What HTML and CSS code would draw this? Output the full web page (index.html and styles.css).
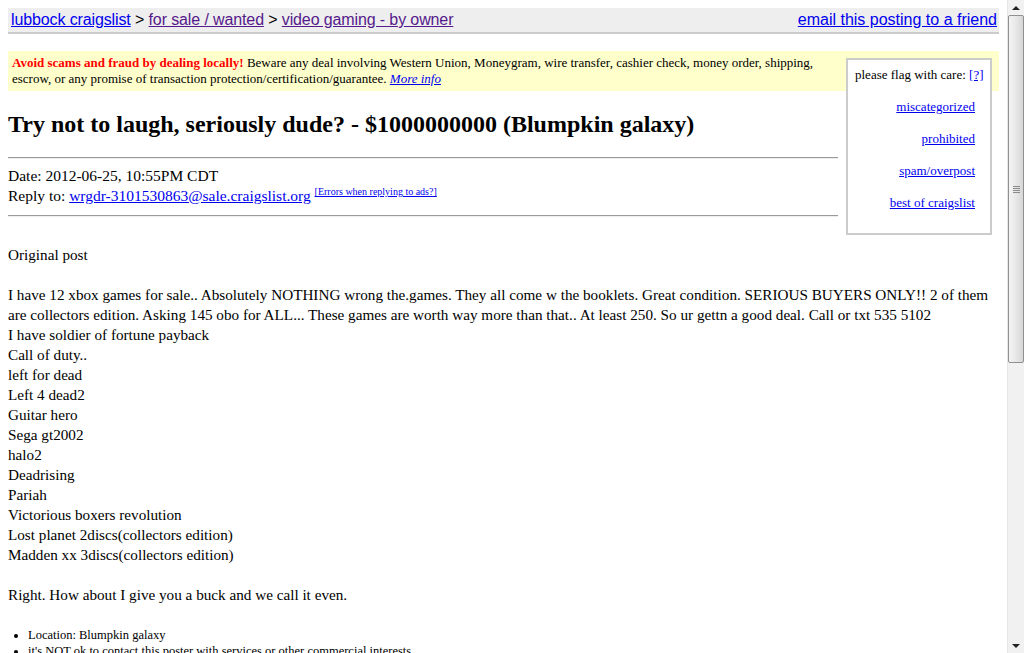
FILE: index.html
```html
<!DOCTYPE html>
<html>
<head>
<meta charset="utf-8">
<title>Try not to laugh, seriously dude?</title>
<link rel="stylesheet" href="styles.css">
</head>
<body>
<div class="window">
  <div class="page">
    <div class="bchead">
      <div class="crumbs"><a class="lnk" href="#">lubbock craigslist</a> &gt; <a class="vis" href="#">for sale / wanted</a> &gt; <a class="vis" href="#">video gaming - by owner</a></div>
      <a class="lnk" href="#">email this posting to a friend</a>
    </div>

    <div class="top">
      <div class="tsb"><b class="warn">Avoid scams and fraud by dealing locally!</b> Beware any deal involving Western Union, Moneygram, wire transfer, cashier check, money order, shipping, escrow, or any promise of transaction protection/certification/guarantee. <a class="lnk more" href="#">More info</a></div>

      <div class="flags">
        <div class="flagmsg">please flag with care: <a class="lnk" href="#">[?]</a></div>
        <div class="flaglinks">
          <a class="lnk" href="#">miscategorized</a>
          <a class="lnk" href="#">prohibited</a>
          <a class="lnk" href="#">spam/overpost</a>
          <a class="lnk" href="#">best of craigslist</a>
        </div>
      </div>

      <div class="head">
        <h2 class="title">Try not to laugh, seriously dude? - $1000000000 (Blumpkin galaxy)</h2>
        <div class="rule"></div>
        <div class="meta">
          <div>Date: 2012-06-25, 10:55PM CDT</div>
          <div>Reply to: <a class="lnk" href="#">wrgdr-3101530863@sale.craigslist.org</a> <sup class="errs"><a class="lnk" href="#">[Errors when replying to ads?]</a></sup></div>
        </div>
        <div class="rule"></div>
      </div>
    </div>

    <div class="userbody">
      Original post<br>
      <br>
      I have 12 xbox games for sale.. Absolutely NOTHING wrong the.games. They all come w the booklets. Great condition. SERIOUS BUYERS ONLY!! 2 of them are collectors edition. Asking 145 obo for ALL... These games are worth way more than that.. At least 250. So ur gettn a good deal. Call or txt 535 5102<br>
      I have soldier of fortune payback<br>
      Call of duty..<br>
      left for dead<br>
      Left 4 dead2<br>
      Guitar hero<br>
      Sega gt2002<br>
      halo2<br>
      Deadrising<br>
      Pariah<br>
      Victorious boxers revolution<br>
      Lost planet 2discs(collectors edition)<br>
      Madden xx 3discs(collectors edition)<br>
      <br>
      Right. How about I give you a buck and we call it even.
    </div>

    <ul class="blurbs">
      <li>Location: Blumpkin galaxy</li>
      <li>it's NOT ok to contact this poster with services or other commercial interests</li>
    </ul>
  </div>

  <div class="scrollbar">
    <div class="sb-btn"><span class="arrow-up"></span></div>
    <div class="sb-track">
      <div class="sb-thumb"><span class="grip"></span></div>
    </div>
    <div class="sb-btn"><span class="arrow-down"></span></div>
  </div>
</div>
</body>
</html>
```

FILE: styles.css
```css
html, body {
  margin: 0;
  padding: 0;
  height: 100%;
  overflow: hidden;
  background: #fff;
}

body {
  font-family: "Liberation Serif", "Times New Roman", serif;
  font-size: 16px;
  line-height: 20px;
  color: #000;
}

.window {
  display: flex;
  height: 653px;
}

.page {
  flex: 1;
  min-width: 0;
  padding: 8px;
  overflow: hidden;
}

.lnk { color: #0000ee; text-decoration: underline; }
.vis { color: #551a8b; text-decoration: underline; }

/* breadcrumb bar */
.bchead {
  display: flex;
  justify-content: space-between;
  align-items: center;
  background: #eeeeee;
  border-bottom: 2px solid #cccccc;
  font-family: "Liberation Sans", Arial, sans-serif;
  font-size: 16px;
  line-height: 18px;
  padding: 3px 2px 3px 3px;
  color: #000;
}

.crumbs {
  letter-spacing: -0.12px;
}

/* top block */
.top {
  display: grid;
  grid-template-columns: 1fr 161px;
  grid-template-rows: auto 1fr;
  margin-top: 17px;
}

.tsb {
  grid-column: 1 / -1;
  grid-row: 1;
  background: #ffffcc;
  font-size: 13px;
  line-height: 16px;
  padding: 4px 170px 4px 4px;
}

.warn { color: #ff0000; }
.more { font-style: italic; }

.flags {
  grid-column: 2;
  grid-row: 1 / 3;
  align-self: start;
  margin: 7px 0 0 8px;
  width: 142px;
  border: 2px solid #cccccc;
  background: #fff;
  font-size: 13px;
  line-height: 16px;
  padding: 7px 0 22px 0;
}

.flagmsg {
  padding-left: 7px;
}

.flaglinks {
  display: flex;
  flex-direction: column;
  align-items: flex-end;
  gap: 16px;
  margin-top: 16px;
  padding-right: 15px;
}

.head {
  grid-column: 1;
  grid-row: 2;
}

.title {
  font-size: 24px;
  line-height: 28px;
  font-weight: bold;
  margin: 19px 0 19px 0;
}

.rule {
  border-top: 1px solid #9a9a9a;
  border-bottom: 1px solid #eeeeee;
}

.meta {
  margin: 7px 0 9px 0;
  font-size: 15.5px;
}

.errs {
  font-size: 10px;
  line-height: 0;
}

/* body */
.userbody {
  margin-top: 10px;
  font-size: 15.2px;
}

.blurbs {
  margin: 22px 0 0 0;
  padding-left: 20px;
  font-size: 12.5px;
  line-height: 16px;
}

/* fake window scrollbar */
.scrollbar {
  width: 17px;
  display: flex;
  flex-direction: column;
  background: #f1f1f1;
  border-left: 1px solid #e6e6e6;
  box-sizing: border-box;
}

.sb-btn {
  height: 15px;
  display: flex;
  align-items: center;
  justify-content: center;
}

.arrow-up {
  width: 0;
  height: 0;
  border-left: 4px solid transparent;
  border-right: 4px solid transparent;
  border-bottom: 4px solid #222;
}

.arrow-down {
  width: 0;
  height: 0;
  border-left: 4px solid transparent;
  border-right: 4px solid transparent;
  border-top: 4px solid #222;
}

.sb-track {
  flex: 1;
  display: flex;
  flex-direction: column;
}

.sb-thumb {
  height: 348px;
  border: 1px solid #8f8f8f;
  border-radius: 2px;
  background: linear-gradient(to right, #f4f4f4 0%, #e9e9e9 45%, #d6d6d6 100%);
  display: flex;
  align-items: center;
  justify-content: center;
  box-sizing: border-box;
}

.grip {
  width: 7px;
  height: 7px;
  background: repeating-linear-gradient(to bottom, #8a8a8a 0 1px, transparent 1px 2px);
}
```
